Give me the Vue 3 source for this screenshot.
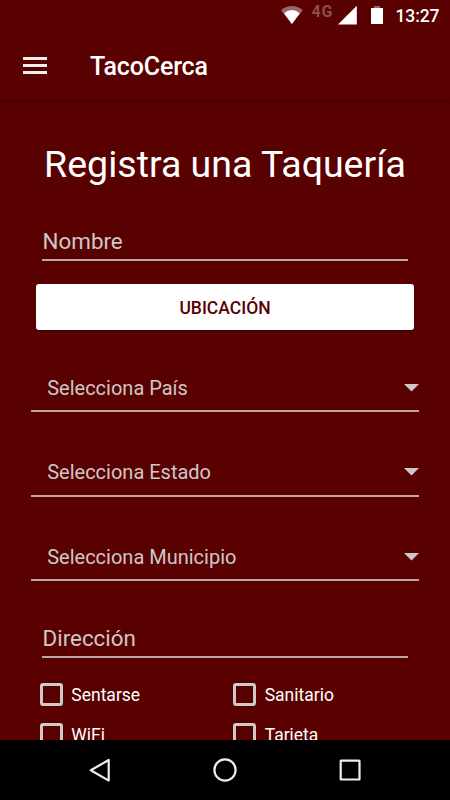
<template>
  <div class="screen">
    <header class="top">
      <div class="status-bar">
        <svg class="status-icons" viewBox="0 0 110 30" aria-hidden="true">
          <path d="M1 10.2Q11.8 2 22.8 10.2L11.9 24Z" fill="#9b6666" />
          <path d="M4 13.2Q11.9 7 19.8 13.2L11.9 24Z" fill="#fff" />
          <text class="network" x="31.5" y="16.5" textLength="21">4G</text>
          <path d="M58 24.6L76.8 5.8V24.6Z" fill="#fff" />
          <path d="M94 6H100V8H94Z" fill="#9b6666" />
          <path d="M91 8H103V24H91Z" fill="#fff" />
        </svg>
        <span class="clock">13:27</span>
      </div>
      <div class="app-bar">
        <button class="menu" type="button" aria-label="Menú">
          <span></span>
          <span></span>
          <span></span>
        </button>
        <span class="app-name">TacoCerca</span>
      </div>
    </header>

    <main class="content">
      <h1 class="title">Registra una Taquería</h1>

      <form class="form" @submit.prevent>
        <input v-model="nombre" class="field" type="text" placeholder="Nombre" />
        <button class="btn-location" type="button">UBICACIÓN</button>

        <div class="selects">
          <div v-for="label in selects" :key="label" class="select">
            <span>{{ label }}</span>
            <svg class="caret" viewBox="0 0 15 8" aria-hidden="true">
              <path d="M0 0H15L7.5 7.6Z" fill="#cdc8c8" />
            </svg>
          </div>
        </div>

        <input v-model="direccion" class="field field--address" type="text" placeholder="Dirección" />

        <div class="services">
          <label v-for="service in services" :key="service" class="check">
            <input v-model="selected" type="checkbox" :value="service" />
            <span>{{ service }}</span>
          </label>
        </div>
      </form>
    </main>

    <nav class="nav-bar">
      <svg viewBox="0 0 26 26" aria-hidden="true">
        <path d="M21.7 3V23.6L3.8 13.3Z" />
      </svg>
      <svg viewBox="0 0 26 26" aria-hidden="true">
        <circle cx="13" cy="13" r="10.6" />
      </svg>
      <svg viewBox="0 0 26 26" aria-hidden="true">
        <rect x="3.7" y="3.7" width="18.8" height="18.8" rx="0.4" />
      </svg>
    </nav>
  </div>
</template>

<script setup>
import { ref } from 'vue';

const nombre = ref('');
const direccion = ref('');
const selected = ref([]);

const selects = ['Selecciona País', 'Selecciona Estado', 'Selecciona Municipio'];
const services = ['Sentarse', 'Sanitario', 'WiFi', 'Tarjeta'];
</script>

<style>
body {
  margin: 0;
  background: #590000;
}
</style>

<style scoped>
.screen {
  display: flex;
  flex-direction: column;
  width: 450px;
  height: 800px;
  overflow: hidden;
  background: #590000;
  color: #fff;
  font-family: Roboto, "Liberation Sans", sans-serif;
}

.top {
  flex: none;
  height: 100px;
  background: #590000;
  box-shadow: 0 1px 3px rgba(0, 0, 0, 0.4);
}

.status-bar {
  display: flex;
  justify-content: flex-end;
  align-items: center;
  height: 30px;
  padding-right: 10px;
}

.status-icons {
  width: 110px;
  height: 30px;
  margin-right: 5.5px;
}

.network {
  fill: #8b4d4d;
  font-size: 16px;
  font-weight: 700;
}

.clock {
  width: 44.5px;
  padding-top: 2px;
  font-size: 17.5px;
  font-weight: 500;
  letter-spacing: -0.1px;
  line-height: 28px;
}

.app-bar {
  display: flex;
  align-items: center;
  height: 70px;
  padding-left: 23px;
}

.menu {
  display: flex;
  flex-direction: column;
  gap: 4px;
  width: 24px;
  padding: 0;
  border: 0;
  background: none;
}

.menu span {
  height: 3px;
  background: #f3eeee;
}

.app-name {
  margin-left: 43px;
  padding-top: 2px;
  font-size: 25px;
  font-weight: 500;
  letter-spacing: -0.15px;
}

.content {
  flex: 1;
  min-height: 0;
  overflow: hidden;
}

.title {
  margin: 42px 0 0;
  font-size: 37.5px;
  font-weight: 400;
  line-height: 45px;
  text-align: center;
  white-space: nowrap;
}

.form {
  display: flex;
  flex-direction: column;
  margin-top: 35px;
  padding: 0 31px;
}

.field {
  box-sizing: border-box;
  height: 39px;
  margin: 0 11px;
  padding: 0 0 0 0.5px;
  border: 0;
  border-bottom: 2px solid #b8a8a8;
  border-radius: 0;
  outline: none;
  background: none;
  color: #fff;
  font: 400 22.4px Roboto, "Liberation Sans", sans-serif;
}

.field::placeholder {
  color: #cdc8c8;
  opacity: 1;
}

.btn-location {
  height: 46px;
  margin: 23px 5px 0;
  padding: 1px 0 0;
  border: 0;
  border-radius: 3px;
  background: #fff;
  box-shadow: 0 1px 2px rgba(0, 0, 0, 0.4);
  color: #590000;
  font: 500 17.5px Roboto, "Liberation Sans", sans-serif;
}

.selects {
  display: grid;
  gap: 34.5px;
  margin-top: 32px;
}

.select {
  box-sizing: border-box;
  display: flex;
  align-items: center;
  justify-content: space-between;
  height: 50px;
  padding: 3px 0 0 16.2px;
  border-bottom: 2px solid #b8a8a8;
  color: #cdc8c8;
  font-size: 20px;
}

.caret {
  width: 15px;
  height: 8px;
}

.field--address {
  margin-top: 38px;
}

.services {
  display: grid;
  grid-template-columns: 193.4px 1fr;
  row-gap: 16px;
  margin: 24px 0 0 9px;
}

.check {
  display: flex;
  align-items: center;
  gap: 8.3px;
  height: 24px;
  font-size: 17.5px;
}

.check span {
  padding-top: 1px;
}

.check input {
  appearance: none;
  box-sizing: border-box;
  flex: none;
  width: 23px;
  height: 23px;
  margin: 0;
  border: 3px solid #cdcaca;
  border-radius: 3px;
}

.check input:checked {
  background: #cdcaca;
}

.nav-bar {
  flex: none;
  box-sizing: border-box;
  display: flex;
  align-items: center;
  justify-content: space-between;
  height: 60px;
  padding: 0 87px;
  background: #000;
}

.nav-bar svg {
  width: 26px;
  height: 26px;
  fill: none;
  stroke: #eee;
  stroke-width: 2.2;
  stroke-linejoin: round;
}
</style>
